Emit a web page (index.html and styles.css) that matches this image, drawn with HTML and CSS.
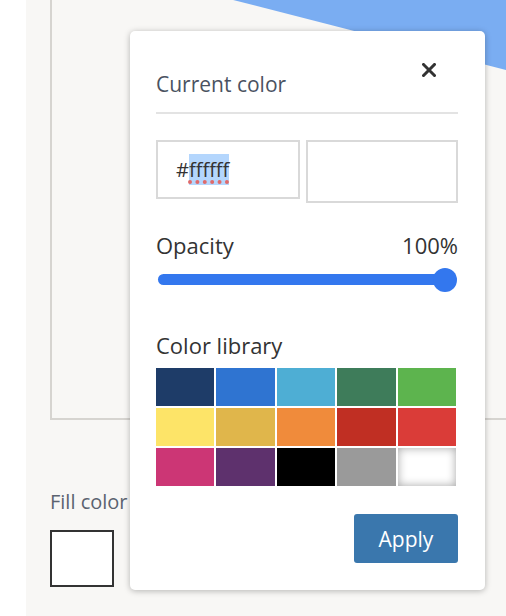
FILE: index.html
```html
<!DOCTYPE html>
<html lang="en">
<head>
    <meta charset="UTF-8">
    <meta name="viewport" content="width=device-width, initial-scale=1.0">
    <title>Shape style</title>
    <link rel="stylesheet" href="styles.css">
</head>
<body>
    <div class="page">
        <div class="gutter"></div>
        <main class="editor">
            <div class="canvas">
                <!-- shape being edited -->
                <svg class="shape" width="520" height="120">
                    <polygon points="150,0 520,95 520,0" fill="#7aadf2" />
                </svg>
            </div>

            <div class="fill">
                <p class="fill-label">Fill color</p>
                <div class="fill-swatch"></div>
            </div>

            <div class="picker">
                <div class="picker-header">
                    <h2>Current color</h2>
                    <button class="close" aria-label="Close">
                        <svg width="14" height="14" viewBox="0 0 14 14">
                            <path d="M1.5 1.5 L12.5 12.5 M12.5 1.5 L1.5 12.5" stroke="#333" stroke-width="3" stroke-linecap="square" />
                        </svg>
                    </button>
                </div>

                <div class="current">
                    <div class="hex-input">#<span class="selected">ffffff</span></div>
                    <div class="preview"></div>
                </div>

                <div class="opacity">
                    <div class="opacity-head">
                        <span>Opacity</span>
                        <span>100%</span>
                    </div>
                    <div class="slider">
                        <div class="track"></div>
                        <div class="thumb"></div>
                    </div>
                </div>

                <h3 class="library-title">Color library</h3>
                <div class="library">
                    <div class="swatch" style="background: #1e3c68"></div>
                    <div class="swatch" style="background: #2f74d1"></div>
                    <div class="swatch" style="background: #4eaed4"></div>
                    <div class="swatch" style="background: #3e7c5a"></div>
                    <div class="swatch" style="background: #5db44e"></div>
                    <div class="swatch" style="background: #fde468"></div>
                    <div class="swatch" style="background: #e0b64b"></div>
                    <div class="swatch" style="background: #f08b3b"></div>
                    <div class="swatch" style="background: #c02f23"></div>
                    <div class="swatch" style="background: #da3c38"></div>
                    <div class="swatch" style="background: #cc3675"></div>
                    <div class="swatch" style="background: #5e316d"></div>
                    <div class="swatch" style="background: #000000"></div>
                    <div class="swatch" style="background: #9a9a9a"></div>
                    <div class="swatch white"></div>
                </div>

                <div class="actions">
                    <button class="apply">Apply</button>
                </div>
            </div>
        </main>
    </div>
</body>
</html>
```

FILE: styles.css
```css
body {
    margin: 0;
    padding: 0;
    font-family: "Open Sans", "Noto Sans", sans-serif;
    background-color: #ffffff;
    overflow: hidden;
}

.page {
    display: flex;
    height: 616px;
}

.gutter {
    width: 26px;
    background-color: #ffffff;
}

.editor {
    flex: 1;
    position: relative;
    background-color: #f8f7f5;
    overflow: hidden;
}

.canvas {
    position: relative;
    margin: -10px 0 0 24px;
    width: 520px;
    height: 430px;
    border: 2px solid #d6d4d0;
    box-sizing: border-box;
    overflow: hidden;
}

.shape {
    position: absolute;
    top: 0;
    left: 0;
}

.fill {
    padding: 69px 0 0 24px;
}

.fill-label {
    margin: 0;
    font-size: 20px;
    line-height: 26px;
    color: #5b6370;
}

.fill-swatch {
    margin-top: 15px;
    width: 64px;
    height: 57px;
    border: 2px solid #333333;
    box-sizing: border-box;
    background-color: #ffffff;
}

/* colour picker popover */
.picker {
    position: absolute;
    top: 31px;
    left: 104px;
    width: 355px;
    height: 559px;
    box-sizing: border-box;
    padding: 0 27px 0 26px;
    background-color: #ffffff;
    border-radius: 5px;
    box-shadow: 0 1px 6px rgba(0, 0, 0, 0.28);
}

.picker-header {
    display: flex;
    justify-content: space-between;
    padding: 39px 0 14px;
    border-bottom: 2px solid #e3e3e3;
}

.picker-header h2 {
    margin: 0;
    font-size: 21px;
    font-weight: normal;
    line-height: 28px;
    color: #4a5261;
}

.close {
    align-self: flex-start;
    margin: -7px 22px 0 0;
    padding: 0;
    border: none;
    background: none;
    line-height: 0;
    cursor: pointer;
}

.current {
    display: flex;
    align-items: flex-start;
    gap: 6px;
    margin-top: 26px;
}

.hex-input {
    width: 144px;
    height: 59px;
    box-sizing: border-box;
    border: 2px solid #d9d9d9;
    padding-left: 18px;
    font-size: 20px;
    line-height: 55px;
    color: #333333;
}

.selected {
    background-color: #b4d6fd;
    padding: 2px 0;
    text-decoration: underline dotted #e06a6a;
    text-decoration-thickness: 4px;
    text-underline-offset: 3px;
}

.preview {
    flex: 1;
    height: 63px;
    box-sizing: border-box;
    border: 2px solid #d9d9d9;
    background-color: #ffffff;
}

.opacity {
    margin-top: 27px;
}

.opacity-head {
    display: flex;
    justify-content: space-between;
    font-size: 22px;
    line-height: 30px;
    color: #333333;
}

.slider {
    position: relative;
    height: 24px;
    margin-top: 8px;
}

.track {
    position: absolute;
    top: 6px;
    left: 2px;
    right: 10px;
    height: 11px;
    border-radius: 6px;
    background-color: #3377ee;
}

.thumb {
    position: absolute;
    top: 0;
    right: 1px;
    width: 24px;
    height: 24px;
    border-radius: 50%;
    background-color: #3377ee;
}

.library-title {
    margin: 38px 0 0;
    font-size: 22px;
    font-weight: normal;
    line-height: 30px;
    color: #333333;
}

.library {
    display: grid;
    grid-template-columns: repeat(5, 1fr);
    grid-auto-rows: 38px;
    gap: 2px;
    width: 300px;
    margin-top: 8px;
}

.swatch.white {
    background-color: #ffffff;
    box-shadow: inset 0 0 10px rgba(0, 0, 0, 0.35);
}

.actions {
    display: flex;
    justify-content: flex-end;
    margin-top: 28px;
}

.apply {
    width: 104px;
    height: 49px;
    border: none;
    border-radius: 3px;
    background-color: #3a77ad;
    color: #ffffff;
    font-family: inherit;
    font-size: 21px;
    cursor: pointer;
}
```
